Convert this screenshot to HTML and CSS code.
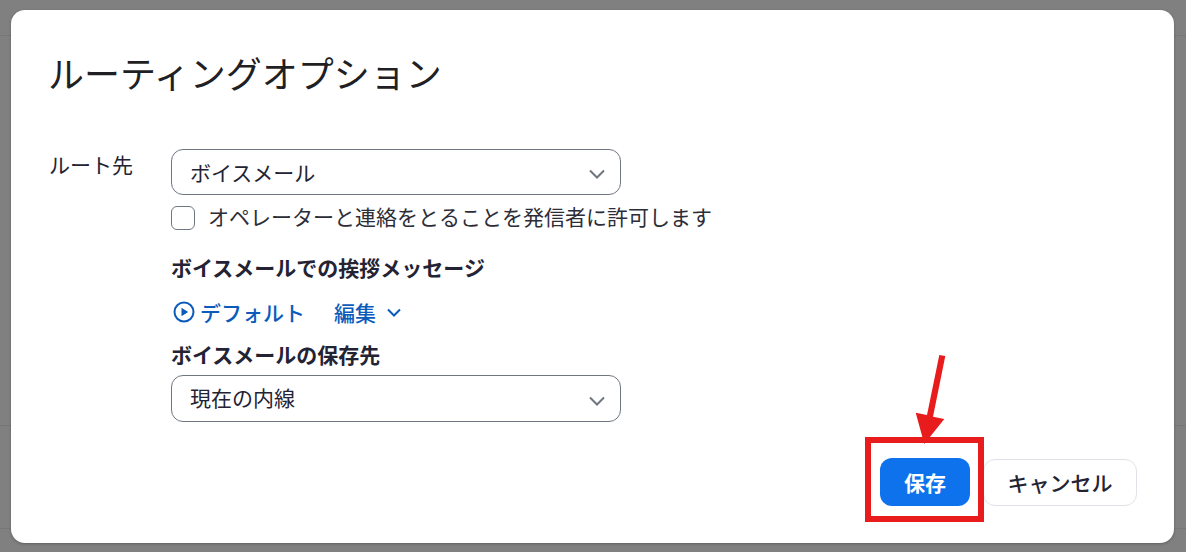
FILE: index.html
```html
<!DOCTYPE html>
<html lang="ja">
<head>
  <meta charset="UTF-8" />
  <title>ルーティングオプション</title>
  <link rel="stylesheet" href="styles.css">
</head>
<body>
  <div class="modal">
    <h1 class="modal-title">ルーティングオプション</h1>

    <div class="form-row">
      <label class="form-label">ルート先</label>
      <div class="form-body">
        <div class="select">
          <span>ボイスメール</span>
          <svg class="select-chevron" viewBox="0 0 16 10"><path d="M1 1.5 8 8.5 15 1.5" /></svg>
        </div>
        <label class="check-row">
          <span class="checkbox"></span>
          <span class="check-text">オペレーターと連絡をとることを発信者に許可します</span>
        </label>
        <div class="section-title greeting-title">ボイスメールでの挨拶メッセージ</div>
        <div class="greeting-links">
          <a class="link play-link">
            <svg class="play-icon" viewBox="0 0 22 22">
              <circle cx="11" cy="11" r="9.5" />
              <path class="play-triangle" d="M8.5 6.8 15.2 11 8.5 15.2Z" />
            </svg>
            デフォルト
          </a>
          <a class="link edit-link">
            編集
            <svg class="edit-chevron" viewBox="0 0 14 9"><path d="M1 1.5 7 7.5 13 1.5" /></svg>
          </a>
        </div>
        <div class="section-title storage-title">ボイスメールの保存先</div>
        <div class="select select-tall">
          <span class="select-value">現在の内線</span>
          <svg class="select-chevron" viewBox="0 0 16 10"><path d="M1 1.5 8 8.5 15 1.5" /></svg>
        </div>
      </div>
    </div>

    <div class="modal-footer">
      <button class="btn btn-primary">保存</button>
      <button class="btn btn-default">キャンセル</button>
    </div>
  </div>

  <!-- annotation drawn over the screenshot -->
  <div class="callout-frame"></div>
  <svg class="callout-arrow" viewBox="0 0 60 100">
    <path d="M26.3 2 32.3 3 20 63.8 31.3 66 11.3 91 2.7 59.7 14 62Z" />
  </svg>
</body>
</html>
```

FILE: styles.css
```css
* {
  margin: 0;
  padding: 0;
  box-sizing: border-box;
}

html, body {
  height: 100%;
}

body {
  background-color: #808080;
  background-image:
    linear-gradient(#777, #777),
    linear-gradient(#777, #777),
    linear-gradient(#777, #777);
  background-repeat: no-repeat;
  background-size: 100% 1px;
  background-position: 0 35px, 0 425px, 0 528px;
  padding: 10px 12px 9px 11px;
  font-family: "Noto Sans CJK JP", "Noto Sans", sans-serif;
  font-size: 21px;
  color: #232333;
  overflow: hidden;
}

.modal {
  height: 533px;
  background: #fff;
  border-radius: 14px;
  padding: 32px 37px 37px 38px;
  display: flex;
  flex-direction: column;
  box-shadow: 0 1px 3px rgba(0, 0, 0, 0.25);
}

.modal-title {
  font-size: 36px;
  font-weight: 400;
  line-height: 60px;
  margin-left: -1px;
  color: #1f1f24;
}

.form-row {
  display: flex;
  margin-top: 47px;
}

.form-label {
  width: 122px;
  line-height: 30px;
  font-size: 21px;
}

.form-body {
  width: 450px;
}

.select {
  height: 46px;
  border: 1px solid #6e7680;
  border-radius: 12px;
  padding: 0 15px 0 18px;
  display: flex;
  align-items: center;
  justify-content: space-between;
}

.select-tall {
  height: 47px;
  margin-top: 6px;
}

.select-value {
  margin-bottom: 3px;
}

.select-chevron {
  width: 16px;
  height: 10px;
  margin-top: 4px;
  fill: none;
  stroke: #6e7680;
  stroke-width: 2;
}

.check-row {
  display: flex;
  align-items: center;
  gap: 13px;
  white-space: nowrap;
  margin-top: 11px;
  height: 24px;
  line-height: 24px;
  color: #2d2d38;
}

.check-text {
  margin-bottom: 4px;
}

.checkbox {
  flex: none;
  width: 24px;
  height: 24px;
  border: 1px solid #6e7680;
  border-radius: 6px;
}

.section-title {
  font-weight: 700;
  line-height: 30px;
  white-space: nowrap;
}

.greeting-title {
  margin-top: 22px;
}

.storage-title {
  margin-top: 12px;
}

.greeting-links {
  display: flex;
  align-items: center;
  gap: 29px;
  height: 30px;
  margin-top: 15px;
}

.link {
  display: flex;
  align-items: center;
  color: #0b5cba;
  font-weight: 500;
}

.play-link {
  margin-left: 2px;
}

.play-icon {
  width: 22px;
  height: 22px;
  margin-right: 5px;
  fill: none;
  stroke: #0b5cba;
  stroke-width: 2;
}

.play-triangle {
  fill: #0b5cba;
  stroke: none;
}

.edit-chevron {
  width: 14px;
  height: 9px;
  margin-left: 11px;
  fill: none;
  stroke: #0b5cba;
  stroke-width: 2;
}

.modal-footer {
  display: flex;
  justify-content: flex-end;
  align-items: center;
  gap: 13px;
  margin-top: auto;
}

.btn {
  font: inherit;
  height: 47px;
  border-radius: 12px;
}

.btn-primary {
  width: 90px;
  height: 48px;
  border: none;
  background: #0e72ed;
  color: #fff;
  font-weight: 700;
}

.btn-default {
  width: 154px;
  background: #fff;
  border: 1px solid #dfe3e8;
  color: #232333;
  font-weight: 500;
}

.callout-frame {
  position: absolute;
  left: 865px;
  top: 437px;
  width: 119px;
  height: 85px;
  border: 6px solid #e81c1c;
}

.callout-arrow {
  position: absolute;
  left: 913px;
  top: 353px;
  width: 60px;
  height: 100px;
  fill: #e81c1c;
}
```
